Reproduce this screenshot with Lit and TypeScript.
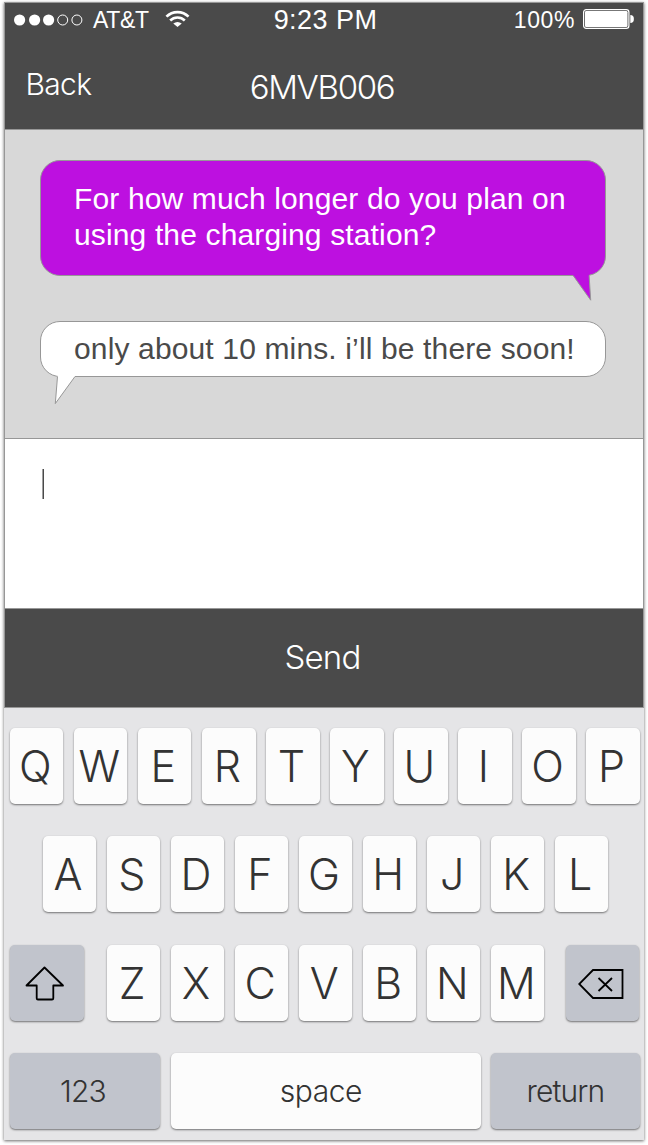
import { LitElement, html, css } from "lit";
import { customElement, property } from "lit/decorators.js";

@customElement("status-bar")
class StatusBar extends LitElement {
  static styles = css`
    :host {
      display: flex;
      height: 34px;
      color: #fff;
      font: 23px/34px "Liberation Sans", Arial, sans-serif;
    }
    .side {
      flex: 1;
      display: flex;
      align-items: center;
      min-width: 0;
    }
    .left {
      padding-left: 9px;
    }
    .right {
      justify-content: flex-end;
      padding-right: 10px;
    }
    .carrier {
      margin: 0 16px 0 10px;
      letter-spacing: -0.3px;
    }
    .clock {
      font-size: 27px;
      letter-spacing: 0.45px;
      padding: 0 0 0 4px;
    }
    .percent {
      margin-right: 8px;
      letter-spacing: 0.6px;
    }
    svg {
      display: block;
      flex: none;
    }
    .bars {
      margin-top: -2px;
    }
    .battery {
      margin: -2px -1px 0 0;
    }
  `;
  render() {
    return html`
      <div class="side left">
        <svg width="69" height="12" viewBox="0 0 69 12" fill="#fff">
          <circle cx="5.6" cy="6" r="5.6" />
          <circle cx="20.6" cy="6" r="5.6" />
          <circle cx="34.6" cy="6" r="5.6" />
          <g fill="none" stroke="#fff" stroke-width="1">
            <circle cx="48.7" cy="6" r="5" />
            <circle cx="62.9" cy="6" r="5" />
          </g>
        </svg>
        <span class="carrier">AT&amp;T</span>
        <svg class="bars" width="25" height="18" viewBox="0 0 26 18">
          <g fill="none" stroke="#fff" stroke-width="2.7">
            <path d="M1.5 6.6C7.8 0.2 18.2 0.2 24.5 6.6" />
            <path d="M5.4 10.6C9.6 6.4 16.4 6.4 20.6 10.6" />
          </g>
          <path fill="#fff" d="M8.6 13.6Q13 10.4 17.4 13.6L13 17.4Z" />
        </svg>
      </div>
      <span class="clock">9:23 PM</span>
      <div class="side right">
        <span class="percent">100%</span>
        <svg class="battery" width="51" height="20" viewBox="0 0 51 20">
          <rect x="0.6" y="0.6" width="45.3" height="18.8" rx="2.6" fill="none" stroke="#fff" stroke-width="1.2" />
          <rect x="2" y="2" width="42.5" height="16" rx="1.2" fill="#fff" />
          <path d="M47.3 6A3.6 4 0 0 1 47.3 14Z" fill="#fff" />
        </svg>
      </div>
    `;
  }
}

@customElement("chat-bubble")
class ChatBubble extends LitElement {
  @property() side = "sent";
  static styles = css`
    :host {
      display: block;
      position: relative;
      font: 30px/36px "Liberation Sans", Arial, sans-serif;
      letter-spacing: 0.14px;
      white-space: nowrap;
    }
    .bubble {
      box-sizing: border-box;
      border: 1px solid #979797;
      border-radius: 20px;
    }
    .sent {
      height: 116px;
      padding: 20px 0 0 33px;
      background: #bd10e0;
      color: #fff;
    }
    .received {
      height: 56px;
      padding: 9px 0 0 33px;
      background: #fff;
      color: #4a4a4a;
    }
    .tail {
      position: absolute;
      top: calc(100% - 2px);
    }
    .tail-sent {
      right: 11px;
    }
    .tail-received {
      left: 13px;
    }
  `;
  render() {
    return html`
      <div class="bubble ${this.side}"><slot></slot></div>
      ${this.side === "sent"
        ? html`<svg class="tail tail-sent" width="24" height="29" viewBox="0 0 24 29">
            <path d="M1.5 0L2 1.5L19.6 26L18 0" fill="#bd10e0" />
            <path d="M2.2 1.5L19.7 26.2L18.1 1.5" fill="none" stroke="#979797" />
          </svg>`
        : html`<svg class="tail tail-received" width="24" height="31" viewBox="0 0 24 31">
            <path d="M4.5 0L2.3 28.6L22 1.5L22 0" fill="#fff" />
            <path d="M4.5 1.5L2.3 28.6L22 1.5" fill="none" stroke="#979797" />
          </svg>`}
    `;
  }
}

@customElement("key-board")
class KeyBoard extends LitElement {
  static styles = css`
    :host {
      box-sizing: border-box;
      display: flex;
      flex-direction: column;
      gap: 32.3px;
      height: 432px;
      padding: 20px 4.5px 0 6.2px;
      background: #e5e5e7;
      color: #333;
      font-family: Inter, "Liberation Sans", sans-serif;
      font-weight: 300;
    }
    .row {
      display: flex;
      justify-content: center;
      gap: 10.65px;
    }
    .row.home {
      padding-left: 1.4px;
    }
    .key {
      flex: none;
      box-sizing: border-box;
      width: 53.4px;
      height: 76px;
      border-radius: 5px;
      background: #fcfcfc;
      box-shadow: 0 1px 2px rgba(0, 0, 0, 0.5);
      display: flex;
      align-items: center;
      justify-content: center;
      font-size: 43px;
      line-height: 76px;
      padding: 0 3px 0 0;
    }
    .dark {
      background: #c1c4cc;
    }
    .word {
      font-size: 30px;
      letter-spacing: -0.9px;
      padding: 0;
    }
    .shift {
      width: 73.4px;
      margin-right: 12.6px;
      padding: 2px 4px 0 0;
    }
    .delete {
      width: 73.2px;
      margin-left: 11.2px;
      padding: 2px 4px 0 0;
    }
    .digits {
      width: 150.3px;
      padding-right: 5px;
    }
    .space {
      flex: 1;
      padding-right: 10px;
      letter-spacing: -0.5px;
    }
    .return {
      width: 148.3px;
    }
    svg {
      display: block;
    }
  `;
  private letters(keys: string) {
    return [...keys].map((k) => html`<div class="key">${k}</div>`);
  }
  render() {
    return html`
      <div class="row">${this.letters("QWERTYUIOP")}</div>
      <div class="row home">${this.letters("ASDFGHJKL")}</div>
      <div class="row">
        <div class="key dark shift">
          <svg width="40" height="36" viewBox="0 0 40 36" fill="none" stroke="#000" stroke-width="1.8" stroke-linejoin="round">
            <path d="M19.5 1.5L38 19.5H28.3V32.2Q28.3 33.5 27 33.5H13Q11.7 33.5 11.7 32.2V19.5H1.5Z" />
          </svg>
        </div>
        ${this.letters("ZXCVBNM")}
        <div class="key dark delete">
          <svg width="46" height="32" viewBox="0 0 46 32" fill="none" stroke="#000" stroke-width="1.8">
            <path d="M15 2H44.5V30H15L1.2 16Z" />
            <path d="M20.5 10L34 23M34 10L20.5 23" />
          </svg>
        </div>
      </div>
      <div class="row">
        <div class="key dark word digits">123</div>
        <div class="key word space">space</div>
        <div class="key dark word return">return</div>
      </div>
    `;
  }
}

@customElement("app-root")
class AppRoot extends LitElement {
  static styles = css`
    :host {
      display: block;
      box-sizing: border-box;
      height: 1145px;
      padding: 2px 4px 0;
      background: #fff;
      overflow: hidden;
    }
    .phone {
      box-shadow: 0 1px 3px rgba(0, 0, 0, 0.6);
    }
    .screen {
      border: 1px solid #979797;
    }
    header,
    .chat,
    .compose {
      box-sizing: border-box;
      border-bottom: 1px solid #979797;
    }
    header {
      height: 127px;
      background: #4a4a4a;
    }
    .nav {
      display: grid;
      grid-template-columns: 1fr auto 1fr;
      color: #fff;
      font: 300 33px/40px Inter, "Liberation Sans", sans-serif;
      padding: 30px 4px 0 0;
    }
    .back {
      font-size: 30px;
      letter-spacing: -0.7px;
      padding-left: 20.5px;
      line-height: 34px;
    }
    .title {
      letter-spacing: -1.3px;
    }
    .chat {
      height: 309px;
      padding: 30px 37px 0 35px;
      background: #d8d8d8;
      display: flex;
      flex-direction: column;
      gap: 45px;
    }
    .compose {
      height: 170px;
      padding: 30px 37px;
      background: #fff;
    }
    .caret {
      width: 2px;
      height: 30px;
      background: linear-gradient(to right, #a0a0a0 50%, #4a4a4a 50%);
    }
    .send {
      height: 98px;
      background: #4a4a4a;
      color: #fff;
      font: 300 33px/97px Inter, "Liberation Sans", sans-serif;
      letter-spacing: -0.8px;
      text-align: center;
      padding-right: 3px;
    }
  `;
  render() {
    return html`
      <div class="phone">
        <div class="screen">
          <header>
            <status-bar></status-bar>
            <div class="nav"><span class="back">Back</span><span class="title">6MVB006</span></div>
          </header>
          <div class="chat">
            <chat-bubble side="sent">For how much longer do you plan on<br />using the charging station?</chat-bubble>
            <chat-bubble side="received">only about 10 mins. i’ll be there soon!</chat-bubble>
          </div>
          <div class="compose"><div class="caret"></div></div>
          <div class="send">Send</div>
        </div>
        <key-board></key-board>
      </div>
    `;
  }
}
